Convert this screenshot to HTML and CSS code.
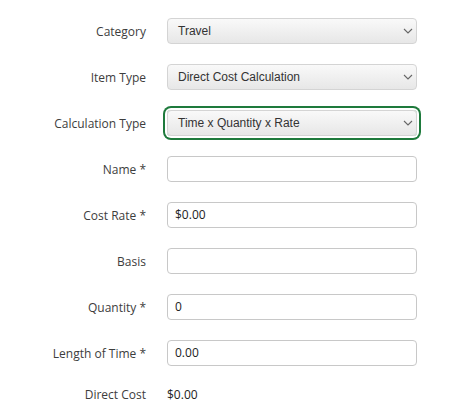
FILE: index.html
```html
<!DOCTYPE html>
<html>
<head>
<meta charset="UTF-8" /><title>Cost Item</title>
<link rel="stylesheet" href="styles.css">
</head>
<body>
<form class="costForm">
	<label class="lbl">Category</label>
	<div class="ctl"><div class="select"><span>Travel</span><svg class="chev" width="10" height="6" viewBox="0 0 10 6"><path d="M1 1 L5 5 L9 1" fill="none" stroke="#666" stroke-width="1.1"/></svg></div></div>

	<label class="lbl">Item Type</label>
	<div class="ctl"><div class="select"><span>Direct Cost Calculation</span><svg class="chev" width="10" height="6" viewBox="0 0 10 6"><path d="M1 1 L5 5 L9 1" fill="none" stroke="#666" stroke-width="1.1"/></svg></div></div>

	<label class="lbl">Calculation Type</label>
	<div class="ctl"><div class="select focus"><span>Time x Quantity x Rate</span><svg class="chev" width="10" height="6" viewBox="0 0 10 6"><path d="M1 1 L5 5 L9 1" fill="none" stroke="#666" stroke-width="1.1"/></svg></div></div>

	<label class="lbl">Name *</label>
	<div class="ctl"><div class="input"></div></div>

	<label class="lbl">Cost Rate *</label>
	<div class="ctl"><div class="input">$0.00</div></div>

	<label class="lbl">Basis</label>
	<div class="ctl"><div class="input"></div></div>

	<label class="lbl">Quantity *</label>
	<div class="ctl"><div class="input">0</div></div>

	<label class="lbl">Length of Time *</label>
	<div class="ctl"><div class="input">0.00</div></div>

	<label class="lbl short">Direct Cost</label>
	<div class="ctl short value">$0.00</div>
</form>
</body>
</html>
```
FILE: styles.css
```css
* {
	margin: 0px;
	padding: 0px;
	box-sizing: border-box;
}
body {
	background: #fff;
	font: 12px "Open Sans", sans-serif;
	color: #333;
}
.costForm {
	display: grid;
	grid-template-columns: 146px 250px;
	grid-auto-rows: 26px;
	column-gap: 21px;
	row-gap: 20px;
	padding-top: 18px;
	align-items: center;
}
.lbl {
	text-align: right;
	color: #3d3d3d;
	white-space: nowrap;
}
.ctl {
	height: 26px;
}
.short {
	height: 18px;
	line-height: 18px;
	align-self: start;
}
.value {
	color: #222;
}
.select {
	height: 26px;
	display: flex;
	align-items: center;
	justify-content: space-between;
	padding: 0px 3px 0px 10px;
	font: 12px "Liberation Sans", Arial, sans-serif;
	color: #333;
	background: linear-gradient(#f9f9f9, #e7e7e7);
	border: 1px solid #d4d4d4;
	border-radius: 4px;
}
.select.focus {
	box-shadow: 0px 0px 0px 2px #fff, 0px 0px 0px 4px #1e7a3c;
}
.input {
	height: 26px;
	line-height: 24px;
	padding-left: 7px;
	background: #fff;
	border: 1px solid #c8c8c8;
	border-radius: 4px;
	color: #222;
}
```
